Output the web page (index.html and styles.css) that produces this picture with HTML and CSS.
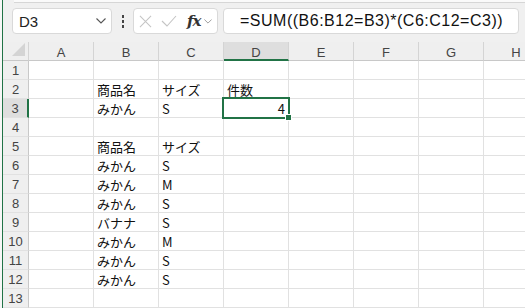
FILE: index.html
```html
<!DOCTYPE html>
<html lang="ja">
<head>
  <meta charset="UTF-8">
  <title>Excel - COUNTIFS</title>
  <link rel="stylesheet" href="styles.css">
</head>
<body>
  <div class="window">
    <div class="edge"></div>
    <div class="main">
      <div class="ribbon-end"></div>

      <div class="formula-bar">
        <div class="name-box">
          <span>D3</span>
          <svg class="chev" viewBox="0 0 10 6"><path d="M0.5 0.5 L5 5 L9.5 0.5" fill="none" stroke="#555" stroke-width="1.1"/></svg>
        </div>
        <div class="dots"><i></i><i></i><i></i></div>
        <div class="fx-box">
          <svg class="ico" viewBox="0 0 14 14"><path d="M1 1 L13 13 M13 1 L1 13" stroke="#c4c4c4" stroke-width="1.1"/></svg>
          <svg class="ico check" viewBox="0 0 16 12"><path d="M1 6 L6 11 L15 1" fill="none" stroke="#c4c4c4" stroke-width="1.1"/></svg>
          <span class="fx">fx</span>
          <svg class="chev small" viewBox="0 0 10 6"><path d="M0.5 0.5 L5 5 L9.5 0.5" fill="none" stroke="#888" stroke-width="1"/></svg>
        </div>
        <div class="formula">=SUM((B6:B12=B3)*(C6:C12=C3))</div>
      </div>

      <div class="sheet">
        <div class="corner"><svg viewBox="0 0 13 13"><path d="M13 0 L13 13 L0 13 Z" fill="#d4d4d4"/></svg></div>
        <div class="col-h">A</div>
        <div class="col-h">B</div>
        <div class="col-h">C</div>
        <div class="col-h active">D</div>
        <div class="col-h">E</div>
        <div class="col-h">F</div>
        <div class="col-h">G</div>
        <div class="col-h">H</div>
      </div>
      <div class="sheet" id="rows"></div>
    </div>
  </div>

  <script>
    // 行データ（A〜H列）
    const data = {
      2: ['', '商品名', 'サイズ', '件数'],
      3: ['', 'みかん', 'S', '4'],
      5: ['', '商品名', 'サイズ'],
      6: ['', 'みかん', 'S'],
      7: ['', 'みかん', 'M'],
      8: ['', 'みかん', 'S'],
      9: ['', 'バナナ', 'S'],
      10: ['', 'みかん', 'M'],
      11: ['', 'みかん', 'S'],
      12: ['', 'みかん', 'S']
    };
    const rows = document.getElementById('rows');
    for (let r = 1; r <= 13; r++) {
      const head = document.createElement('div');
      head.className = 'row-h' + (r === 3 ? ' active' : '');
      head.textContent = r;
      rows.appendChild(head);
      const vals = data[r] || [];
      for (let c = 0; c < 8; c++) {
        const cell = document.createElement('div');
        cell.className = 'cell';
        cell.textContent = vals[c] || '';
        if (r === 3 && c === 3) {
          cell.classList.add('num');
          const sel = document.createElement('div');
          sel.className = 'selection';
          const handle = document.createElement('div');
          handle.className = 'handle';
          sel.appendChild(handle);
          cell.appendChild(sel);
        }
        rows.appendChild(cell);
      }
    }
  </script>
</body>
</html>
```

FILE: styles.css
```css
:root {
  --green: #217346;
  --grid: #e1e1e1;
  --header: #efefef;
  --header-line: #c8c8c8;
  --bar: #f0f0f0;
}

* {
  margin: 0;
  padding: 0;
  box-sizing: border-box;
}

body {
  width: 525px;
  height: 308px;
  overflow: hidden;
  background: var(--bar);
  font-family: 'Noto Sans CJK JP', sans-serif;
  color: #111;
}

.window {
  display: flex;
  height: 100%;
}

.edge {
  width: 3px;
  flex-shrink: 0;
  background: #f7f7f7;
  border-right: 1px solid var(--green);
}

.main {
  flex: 1;
  overflow: hidden;
}

.ribbon-end {
  height: 3px;
  background: #fafafa;
  border-bottom: 1px solid #d6d6d6;
  margin-left: 11px;
}

.formula-bar {
  display: flex;
  align-items: center;
  height: 39px;
  padding: 5px 0 8px 9px;
}

.name-box {
  width: 100px;
  flex-shrink: 0;
  height: 26px;
  background: white;
  border: 1px solid #d9d9d9;
  border-radius: 4px;
  display: flex;
  align-items: center;
  justify-content: space-between;
  padding: 0 4px 0 6px;
  font-family: 'Liberation Sans', sans-serif;
  font-size: 15px;
  color: #222;
}

.chev {
  width: 10px;
  height: 6px;
  margin-right: 1px;
}

.chev.small {
  width: 8px;
  height: 5px;
}

.dots {
  width: 21px;
  flex-shrink: 0;
  display: flex;
  flex-direction: column;
  align-items: center;
  gap: 2px;
}

.dots i {
  width: 2px;
  height: 3px;
  background: #444;
}

.fx-box {
  width: 85px;
  flex-shrink: 0;
  height: 26px;
  background: white;
  border: 1px solid #d9d9d9;
  border-radius: 4px;
  display: flex;
  align-items: center;
  padding-left: 5px;
}

.ico {
  width: 13px;
  height: 13px;
  margin-right: 9px;
}

.ico.check {
  width: 16px;
  height: 12px;
  margin-right: 10px;
}

.fx {
  font-family: 'DejaVu Serif', serif;
  font-style: italic;
  font-weight: bold;
  font-size: 15px;
  color: #333;
  margin-right: 4px;
  letter-spacing: -1px;
}

.formula {
  width: 296px;
  flex-shrink: 0;
  height: 26px;
  margin-left: 5px;
  background: white;
  border: 1px solid #d9d9d9;
  border-radius: 4px;
  padding-left: 16px;
  font-family: 'Liberation Sans', sans-serif;
  font-size: 16px;
  letter-spacing: 0.5px;
  line-height: 24px;
  color: #111;
  white-space: nowrap;
}

.sheet {
  display: grid;
  grid-template-columns: 26px repeat(8, 65px);
  grid-auto-rows: 19px;
  background: white;
}

.sheet:first-of-type {
  grid-auto-rows: 22px;
}

.corner,
.col-h {
  background: var(--header);
  border-bottom: 1px solid var(--header-line);
  border-right: 1px solid #d4d4d4;
}

.corner {
  display: flex;
  align-items: flex-end;
  justify-content: flex-end;
  padding: 0 3px 4px 0;
}

.corner svg {
  width: 13px;
  height: 13px;
}

.col-h {
  text-align: center;
  font-family: 'Liberation Sans', sans-serif;
  font-size: 13px;
  line-height: 21px;
  color: #444;
}

.col-h.active {
  background: #dedede;
  border-bottom: 2px solid var(--green);
}

.row-h {
  background: var(--header);
  border-right: 1px solid var(--header-line);
  border-bottom: 1px solid var(--grid);
  text-align: center;
  font-family: 'Liberation Sans', sans-serif;
  font-size: 13px;
  line-height: 19px;
  color: #444;
}

.row-h.active {
  background: #dedede;
  border-right: 2px solid var(--green);
}

.cell {
  position: relative;
  border-right: 1px solid var(--grid);
  border-bottom: 1px solid var(--grid);
  padding: 0 3px;
  font-size: 13px;
  line-height: 20px;
  white-space: nowrap;
}

.cell.num {
  text-align: right;
  padding-right: 3px;
}

.selection {
  position: absolute;
  z-index: 2;
  left: -2px;
  top: -2px;
  width: 68px;
  height: 22px;
  border: 2px solid var(--green);
}

.handle {
  position: absolute;
  left: 61px;
  top: 15px;
  width: 7px;
  height: 7px;
  background: var(--green);
  border: 1px solid white;
}
```
